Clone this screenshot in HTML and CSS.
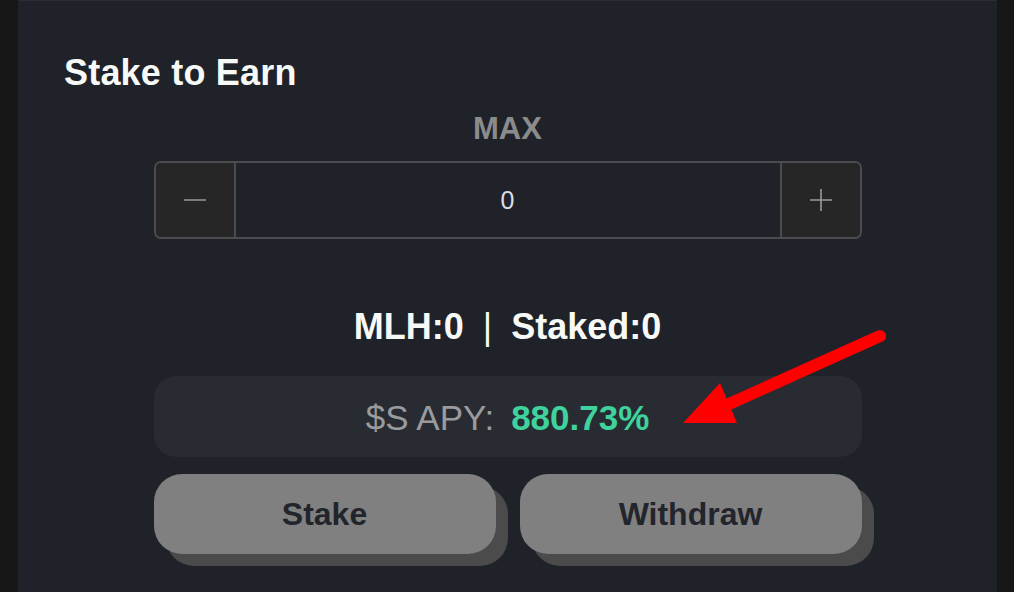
FILE: index.html
```html
<!DOCTYPE html>
<html lang="en">
<head>
<meta charset="utf-8">
<title>Stake to Earn</title>
<link rel="stylesheet" href="styles.css">
</head>
<body>
<main class="card">
  <h1 class="title">Stake to Earn</h1>
  <div class="content">
    <div class="max">MAX</div>
    <div class="stepper">
      <button class="step-btn" aria-label="decrease">
        <svg width="24" height="24" viewBox="0 0 24 24"><path d="M1 12h22" stroke="#9a9a9a" stroke-width="1.6"/></svg>
      </button>
      <div class="value">0</div>
      <button class="step-btn" aria-label="increase">
        <svg width="24" height="24" viewBox="0 0 24 24"><path d="M1 12h22M12 1v22" stroke="#9a9a9a" stroke-width="1.6"/></svg>
      </button>
    </div>
    <div class="balances">
      <span>MLH:0</span><span class="sep">|</span><span>Staked:0</span>
    </div>
    <div class="apy">
      <span class="apy-label">$S APY:</span><span class="apy-value">880.73%</span>
    </div>
    <div class="actions">
      <button class="action">Stake</button>
      <button class="action">Withdraw</button>
    </div>
  </div>
  <svg class="arrow" width="1014" height="592" viewBox="0 0 1014 592">
    <line x1="880" y1="336" x2="718" y2="409" stroke="#ff0000" stroke-width="12" stroke-linecap="round"/>
    <polygon points="683,423 720,383 737,423" fill="#ff0000"/>
  </svg>
</main>
</body>
</html>
```

FILE: styles.css
```css
html, body {
  margin: 0;
  padding: 0;
  background: #171717;
  height: 100%;
  overflow: hidden;
}

body {
  font-family: "Liberation Sans", Arial, sans-serif;
}

.card {
  width: 979px;
  margin-left: 18px;
  min-height: 600px;
  box-sizing: border-box;
  background: #1f2229;
  border-top: 1px solid #2a2d33;
  padding: 54px 46px 0;
}

.title {
  margin: 0;
  font-size: 36px;
  line-height: 36px;
  font-weight: 700;
  color: #f7f9f6;
  letter-spacing: 0.2px;
}

.content {
  width: 708px;
  margin: 0 auto;
  display: flex;
  flex-direction: column;
  align-items: stretch;
}

.max {
  margin-top: 22px;
  text-align: center;
  font-size: 31px;
  line-height: 31px;
  font-weight: 700;
  color: #8b8b8c;
}

.stepper {
  margin-top: 17px;
  height: 78px;
  box-sizing: border-box;
  border: 2px solid #4a4c50;
  border-radius: 7px;
  overflow: hidden;
  display: grid;
  grid-template-columns: 80px 1fr 80px;
}

.step-btn {
  border: none;
  margin: 0;
  padding: 0;
  background: #262626;
  display: flex;
  align-items: center;
  justify-content: center;
}

.step-btn:first-child {
  border-right: 2px solid #4a4c50;
}

.step-btn:last-child {
  border-left: 2px solid #4a4c50;
}

.value {
  display: flex;
  align-items: center;
  justify-content: center;
  font-size: 25px;
  color: #dcdde0;
}

.balances {
  margin-top: 70px;
  display: flex;
  justify-content: center;
  align-items: center;
  font-size: 36px;
  line-height: 35px;
  font-weight: 700;
  color: #f7f9f6;
}

.sep {
  margin: 0 19px;
  font-weight: 400;
}

.apy {
  margin-top: 32px;
  height: 81px;
  border-radius: 22px;
  background: #282b32;
  display: flex;
  justify-content: center;
  align-items: center;
  gap: 17px;
  font-size: 35px;
  padding-top: 3px;
  box-sizing: border-box;
}

.apy-label {
  color: #9a9b9d;
}

.apy-value {
  color: #3fd29d;
  font-weight: 700;
}

.actions {
  margin-top: 17px;
  display: grid;
  grid-template-columns: 1fr 1fr;
  gap: 24px;
}

.action {
  height: 80px;
  border: none;
  border-radius: 28px;
  background: #808080;
  box-shadow: 12px 12px 0 #4b4b4b;
  font-family: "Liberation Sans", Arial, sans-serif;
  font-size: 32px;
  font-weight: 700;
  color: #22252c;
  padding-top: 2px;
}

.arrow {
  position: absolute;
  left: 0;
  top: 0;
  pointer-events: none;
}
```
